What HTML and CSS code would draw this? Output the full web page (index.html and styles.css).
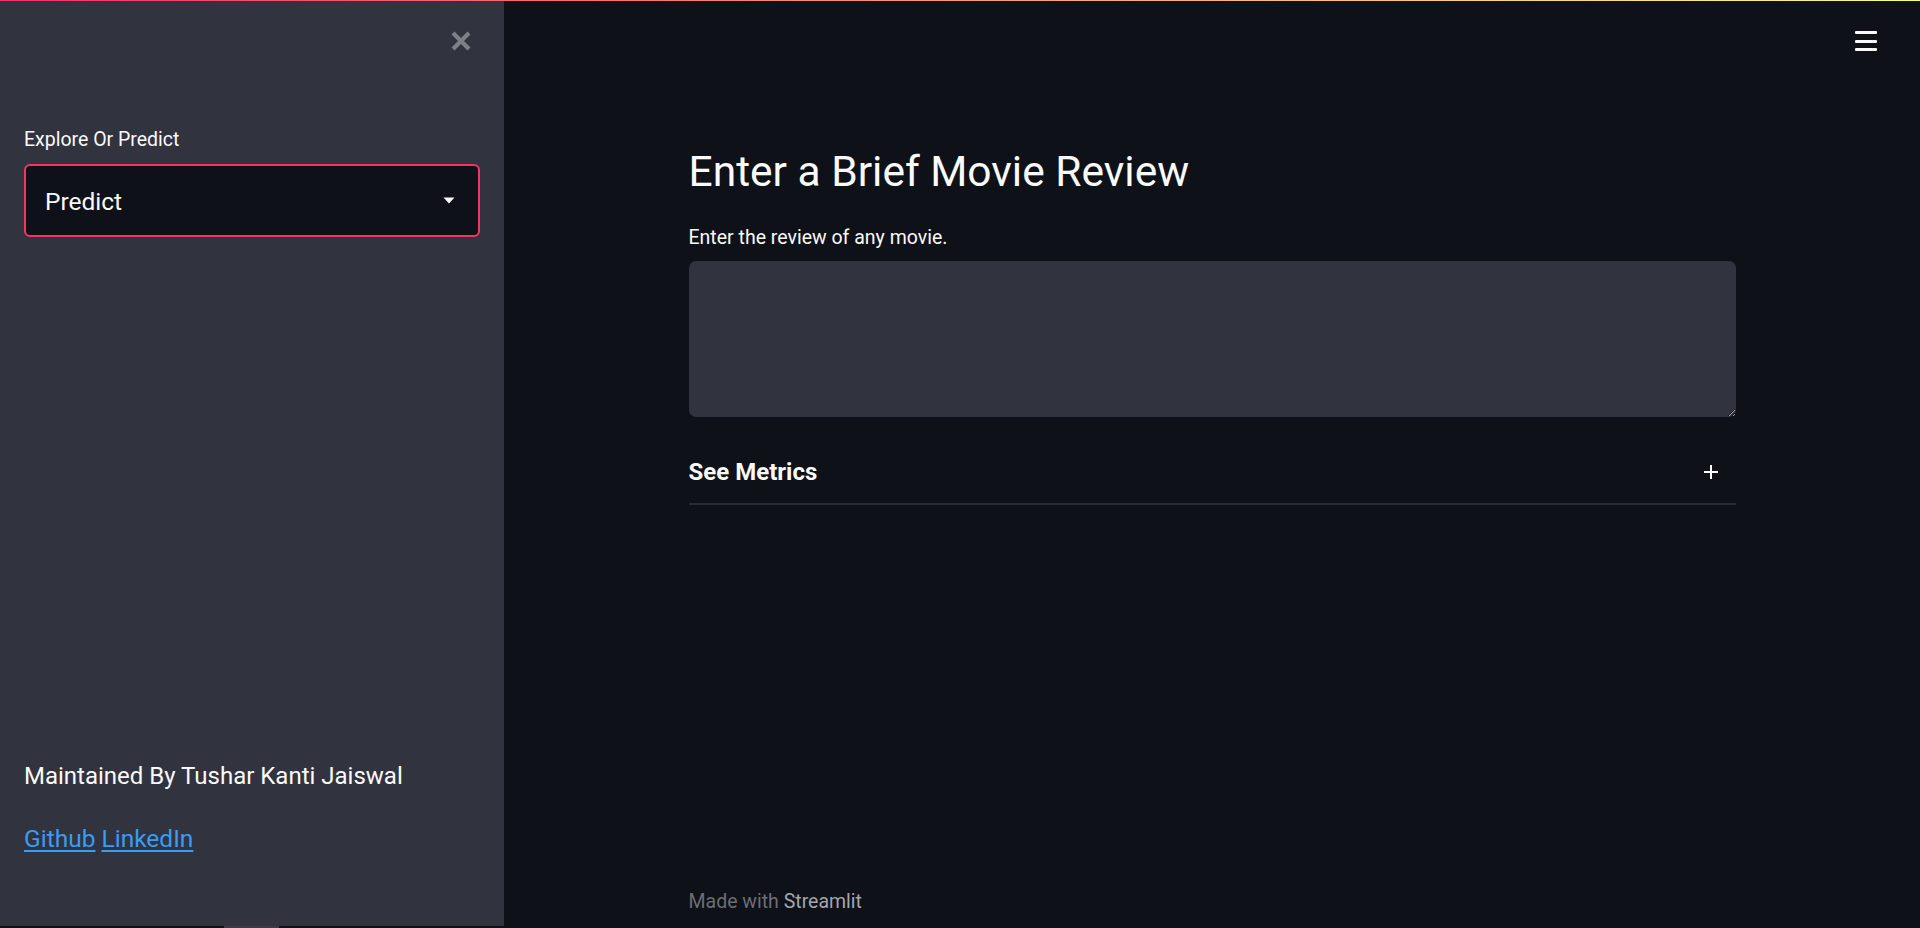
FILE: index.html
```html
<!DOCTYPE html>
<html lang="en">
<head>
<meta charset="utf-8">
<title>Movie Review</title>
<link rel="stylesheet" href="styles.css">
</head>
<body>
<div class="decoration"></div>
<div class="app">
  <aside class="sidebar">
    <div class="sidebar-top">
      <button class="close-btn" aria-label="Close sidebar">
        <svg width="22" height="22" viewBox="0 0 22 22"><path d="M3 3 L19 19 M19 3 L3 19" stroke="#7d7f89" stroke-width="4.2" stroke-linecap="butt"/></svg>
      </button>
    </div>
    <label class="field-label">Explore Or Predict</label>
    <div class="select">
      <span class="select-value">Predict</span>
      <svg class="caret" width="12" height="7" viewBox="0 0 12 7"><path d="M0.5 0.5 L11.5 0.5 L6 6.5 Z" fill="#fafafa"/></svg>
    </div>
    <div class="sidebar-bottom">
      <p class="maintainer">Maintained By Tushar Kanti Jaiswal</p>
      <p class="links"><a href="#">Github</a> <a href="#">LinkedIn</a></p>
    </div>
    <div class="hscroll"></div>
  </aside>
  <main class="main">
    <header class="toolbar">
      <button class="menu-btn" aria-label="Menu">
        <span></span><span></span><span></span>
      </button>
    </header>
    <section class="block">
      <h2 class="title">Enter a Brief Movie Review</h2>
      <label class="field-label main-label">Enter the review of any movie.</label>
      <textarea class="review"></textarea>
      <div class="expander">
        <span class="expander-title">See Metrics</span>
        <svg width="14" height="14" viewBox="0 0 14 14"><path d="M7 0 V14 M0 7 H14" stroke="#fafafa" stroke-width="2"/></svg>
      </div>
    </section>
    <footer class="footer">Made with <span class="brand">Streamlit</span></footer>
  </main>
</div>
</body>
</html>
```
FILE: styles.css
```css
* { box-sizing: border-box; }
html, body {
  margin: 0;
  height: 100%;
  background: #0e1117;
  overflow: hidden;
}
body {
  font-family: Roboto, "Noto Sans", sans-serif;
  color: #fafafa;
  position: relative;
}
.decoration {
  position: absolute;
  top: 0; left: 0; right: 0;
  height: 1px;
  background: linear-gradient(90deg, #f63366, #fffd80);
  z-index: 5;
}
.app {
  display: flex;
  height: 928px;
}
.sidebar {
  position: relative;
  width: 504px;
  flex: 0 0 504px;
  height: 926px;
  background: #31333f;
  display: flex;
  flex-direction: column;
  padding: 0 24px 0 24px;
}
.sidebar-top {
  display: flex;
  justify-content: flex-end;
  padding-top: 30px;
  padding-right: 8px;
  height: 128px;
}
.close-btn, .menu-btn {
  background: none;
  border: 0;
  padding: 0;
  cursor: pointer;
}
.close-btn { width: 22px; height: 22px; }
.field-label {
  display: block;
  font-size: 19.5px;
  line-height: 24px;
  color: #fafafa;
}
.select {
  margin-top: 12px;
  height: 73px;
  width: 456px;
  border: 2.5px solid #f63366;
  border-radius: 6px;
  background: #0e1117;
  display: flex;
  align-items: center;
  justify-content: space-between;
  padding: 1px 23px 0 19px;
}
.select-value {
  font-size: 24.5px;
  color: #fafafa;
}
.caret { margin-bottom: 1px; }
.sidebar-bottom {
  margin-top: auto;
  padding-bottom: 72px;
}
.maintainer {
  margin: 0 0 33px 0;
  font-size: 24px;
  line-height: 30px;
  color: #fafafa;
}
.links {
  margin: 0;
  font-size: 24.5px;
  line-height: 30px;
}
.links a {
  color: #3a9cf2;
  text-decoration: underline;
  text-underline-offset: 3px;
}
.hscroll {
  position: absolute;
  left: 224px;
  bottom: -2px;
  width: 55px;
  height: 2px;
  background: #3b3c45;
}
.main {
  flex: 1;
  display: flex;
  flex-direction: column;
  min-width: 0;
}
.toolbar {
  display: flex;
  justify-content: flex-end;
  padding: 31px 43px 0 0;
  height: 144px;
}
.menu-btn {
  width: 22px;
  height: 20px;
  display: flex;
  flex-direction: column;
  justify-content: space-between;
}
.menu-btn span {
  display: block;
  height: 3px;
  background: #fafafa;
  border-radius: 1px;
}
.block {
  width: 1047px;
  margin: 0 auto;
}
.title {
  margin: 0;
  font-weight: 400;
  font-size: 42.5px;
  line-height: 56px;
  color: #fafafa;
}
.main-label {
  margin-top: 26px;
}
.review {
  display: block;
  margin-top: 11px;
  width: 1047px;
  height: 156px;
  background: #31333f;
  border: 0;
  border-radius: 7px;
  resize: vertical;
  outline: none;
  color: #fafafa;
}
.expander {
  margin-top: 33px;
  height: 55px;
  display: flex;
  align-items: center;
  justify-content: space-between;
  padding: 0 18px 10px 0;
  border-bottom: 2px solid #2a2c33;
}
.expander-title {
  font-weight: 700;
  font-size: 24px;
}
.footer {
  margin-top: auto;
  width: 1047px;
  margin-left: auto;
  margin-right: auto;
  padding-bottom: 14px;
  font-size: 19.5px;
  line-height: 24px;
  color: #6b6e77;
}
.brand { color: #a4a6ad; }
```
